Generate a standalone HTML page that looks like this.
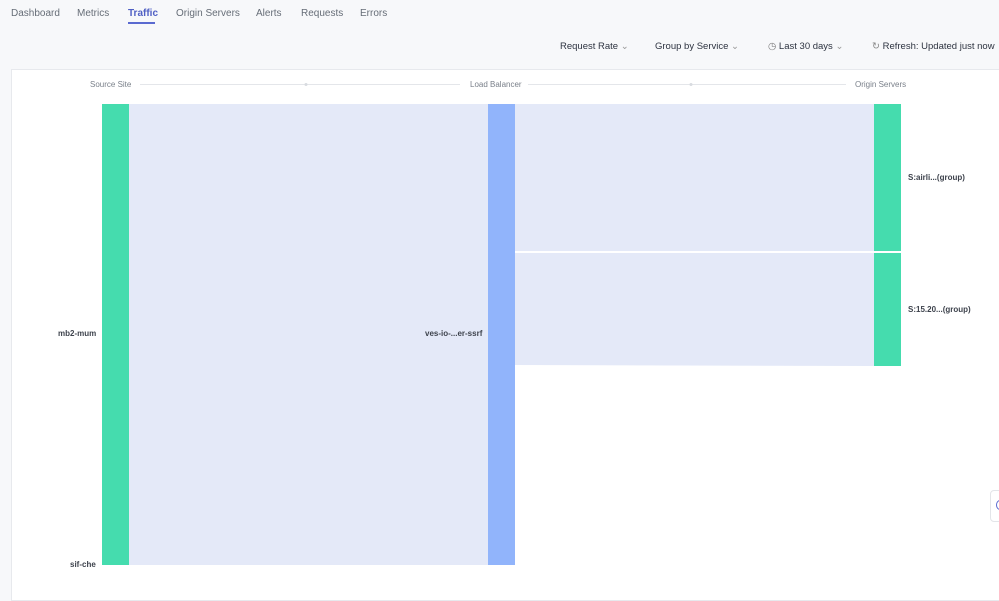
<!DOCTYPE html>
<html><head><style>
body{margin:0;width:999px;height:586px;overflow:hidden;background:#f7f8fa;font-family:"Liberation Sans",sans-serif;position:relative}
.t{position:absolute;font-size:10px;color:#666d77;top:8px}
.a{position:absolute;font-size:8px;color:#7a808a;top:80px}
.c{position:absolute;font-size:9.5px;color:#2d3340;top:41px}
.l{position:absolute;font-size:8px;font-weight:bold;color:#3d424c}
</style></head><body>
<div class="t" style="left:11px">Dashboard</div>
<div class="t" style="left:77px">Metrics</div>
<div class="t" style="left:128px;color:#4f5fc4;font-weight:bold">Traffic</div>
<div style="position:absolute;left:128px;top:22px;width:27px;height:2px;background:#5a6ad0"></div>
<div class="t" style="left:176px">Origin Servers</div>
<div class="t" style="left:256px">Alerts</div>
<div class="t" style="left:301px">Requests</div>
<div class="t" style="left:360px">Errors</div>
<div class="c" style="left:560px">Request Rate <span style="color:#999">⌄</span></div>
<div class="c" style="left:655px">Group by Service <span style="color:#999">⌄</span></div>
<div class="c" style="left:768px"><span style="color:#777">◷</span> Last 30 days <span style="color:#999">⌄</span></div>
<div class="c" style="left:872px"><span style="color:#888">↻</span> Refresh: Updated just now</div>
<div style="position:absolute;left:11px;top:69px;width:1000px;height:530px;background:#fff;border:1px solid #e7e9ed"></div>
<div class="a" style="left:90px">Source Site</div>
<div class="a" style="left:470px">Load Balancer</div>
<div class="a" style="left:855px">Origin Servers</div>
<svg style="position:absolute;left:0;top:0" width="999" height="586">
<line x1="140" y1="84.5" x2="460" y2="84.5" stroke="#e4e6ea"/>
<line x1="528" y1="84.5" x2="846" y2="84.5" stroke="#e4e6ea"/>
<circle cx="306" cy="84.5" r="1.5" fill="#d8dbe0"/><circle cx="691" cy="84.5" r="1.5" fill="#d8dbe0"/>
<rect x="129" y="104" width="359" height="461" fill="#e4e9f8"/>
<rect x="515" y="104" width="359" height="147" fill="#e4e9f8"/>
<path d="M515 253 L874 253 L874 366 L515 365Z" fill="#e4e9f8"/>
<rect x="102" y="104" width="27" height="460" fill="#45dcae"/>
<rect x="102" y="564" width="27" height="1" fill="#45dcae"/>
<rect x="488" y="104" width="27" height="461" fill="#91b4fb"/>
<rect x="874" y="104" width="27" height="147" fill="#45dcae"/>
<rect x="874" y="253" width="27" height="113" fill="#45dcae"/>
</svg>
<div class="l" style="left:58px;top:329px">mb2-mum</div>
<div class="l" style="left:70px;top:560px">sif-che</div>
<div class="l" style="left:425px;top:329px">ves-io-...er-ssrf</div>
<div class="l" style="left:908px;top:173px">S:airli...(group)</div>
<div class="l" style="left:908px;top:305px">S:15.20...(group)</div>
<div style="position:absolute;left:990px;top:490px;width:20px;height:30px;background:#fff;border:1px solid #e3e5e9;border-radius:4px"></div>
<div style="position:absolute;left:996px;top:500px;width:6px;height:8px;border:1.5px solid #5a6ad0;border-radius:50%"></div>
</body></html>
